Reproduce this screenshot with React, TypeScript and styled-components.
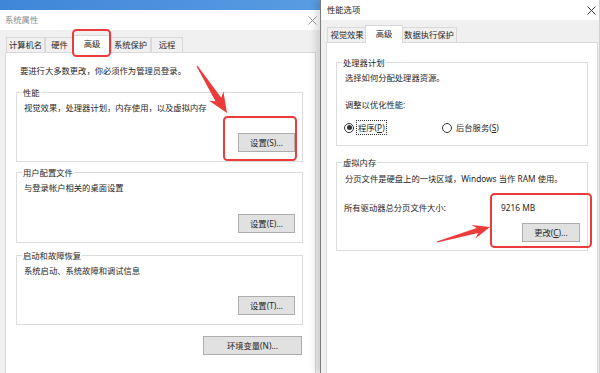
import { FC, ReactNode } from "react";
import styled, { createGlobalStyle } from "styled-components";

const GlobalStyle = createGlobalStyle`
  body {
    margin: 0;
  }
`;

const Root = styled.div`
  width: 600px;
  height: 373px;
  position: relative;
  overflow: hidden;
  display: flex;
  background: linear-gradient(90deg, #3f86d8 0%, #5c9fe4 60%, #4a8fdd 100%);
  font-family: "Noto Sans", "Noto Sans CJK SC", sans-serif;
  font-size: 8.3px;
  color: #262626;
`;

const LeftWindow = styled.section`
  width: 320px;
  margin-top: 10px;
  display: flex;
  flex-direction: column;
  background: #f0f0f0;
`;

const RightWindow = styled.section`
  flex: 1;
  display: flex;
  flex-direction: column;
  background: #f0f0f0;
  border-left: 1px solid #7d7d7d;
  border-right: 1px solid #d0d0d0;
  box-shadow: -5px 0 6px rgba(0, 0, 0, 0.12);
  z-index: 1;
`;

const TitleBar = styled.header<{ $left: number; $right: number; $inactive?: boolean }>`
  height: 20px;
  flex-shrink: 0;
  display: flex;
  align-items: center;
  justify-content: space-between;
  padding: 0 ${({ $right }) => $right}px 0 ${({ $left }) => $left}px;
  background: #fff;
  line-height: 12px;
  color: ${({ $inactive }) => ($inactive ? "#8c8c8c" : "#262626")};
`;

const TabStrip = styled.nav<{ $left: number }>`
  height: 22px;
  flex-shrink: 0;
  display: flex;
  align-items: flex-end;
  padding-left: ${({ $left }) => $left}px;
`;

const Tab = styled.div<{ $active?: boolean; $w: number }>`
  width: ${({ $w, $active }) => ($active ? $w + 4 : $w)}px;
  height: ${({ $active }) => ($active ? 18 : 15)}px;
  margin: ${({ $active }) => ($active ? "0 -2px -1px" : "0")};
  box-sizing: border-box;
  border: 1px solid #d9d9d9;
  border-bottom: none;
  background: ${({ $active }) => ($active ? "#fff" : "#f0f0f0")};
  display: flex;
  align-items: ${({ $active }) => ($active ? "flex-start" : "center")};
  padding-top: ${({ $active }) => ($active ? 2 : 0)}px;
  justify-content: center;
  line-height: 12px;
  white-space: nowrap;
  position: relative;
  z-index: ${({ $active }) => ($active ? 1 : 0)};
`;

const Page = styled.div<{ $ml: number; $mr: number; $pad: string }>`
  flex: 1;
  display: flex;
  flex-direction: column;
  background: #fff;
  border: 1px solid #d9d9d9;
  border-bottom: none;
  margin: 0 ${({ $mr }) => $mr}px 0 ${({ $ml }) => $ml}px;
  padding: ${({ $pad }) => $pad};
`;

const Intro = styled.p`
  margin: 0;
  padding-left: 4px;
  line-height: 12px;
  white-space: nowrap;
`;

const Group = styled.div<{ $h: number; $mt: number; $pb: number }>`
  height: ${({ $h }) => $h}px;
  margin-top: ${({ $mt }) => $mt}px;
  box-sizing: border-box;
  border: 1px solid #dcdcdc;
  display: flex;
  flex-direction: column;
  padding: 0 7px ${({ $pb }) => $pb}px 7px;
  flex-shrink: 0;
`;

const Caption = styled.span`
  align-self: flex-start;
  margin: -6px 0 0 -2px;
  padding: 0 1px;
  background: #fff;
  line-height: 11px;
  white-space: nowrap;
`;

const Desc = styled.p<{ $mt: number; $indent?: number }>`
  margin: ${({ $mt }) => $mt}px 0 0;
  padding-left: ${({ $indent }) => $indent ?? 0}px;
  line-height: 12px;
  white-space: nowrap;
`;

const ButtonRow = styled.div<{ $mt?: number; $pr?: number }>`
  margin-top: ${({ $mt }) => ($mt === undefined ? "auto" : `${$mt}px`)};
  padding-right: ${({ $pr }) => $pr ?? 0}px;
  display: flex;
  justify-content: flex-end;
`;

const WinButton = styled.button<{ $w: number }>`
  width: ${({ $w }) => $w}px;
  height: 19px;
  box-sizing: border-box;
  border: 1px solid #adadad;
  background: #e1e1e1;
  font: inherit;
  color: #262626;
  padding: 0;
  line-height: 17px;
`;

const RadioGroup = styled.div`
  margin-top: 9px;
  display: grid;
  grid-template-columns: 98px auto;
  align-items: center;
`;

const RadioOption = styled.label`
  display: flex;
  align-items: center;
  gap: 2px;
  line-height: 11px;
  white-space: nowrap;
`;

const RadioDot = styled.span<{ $checked?: boolean }>`
  width: 10px;
  height: 10px;
  box-sizing: border-box;
  border: 1px solid #333;
  border-radius: 50%;
  background: #fff;
  display: flex;
  align-items: center;
  justify-content: center;
  &::after {
    content: "";
    width: 5px;
    height: 5px;
    border-radius: 50%;
    background: ${({ $checked }) => ($checked ? "#333" : "transparent")};
  }
`;

const RadioText = styled.span<{ $focus?: boolean }>`
  padding: 1px 1px;
  border: 1px dotted ${({ $focus }) => ($focus ? "#333" : "transparent")};
`;

const SizeRow = styled.div`
  margin-top: 17px;
  display: grid;
  grid-template-columns: 157px auto;
  line-height: 12px;
  white-space: nowrap;
`;

const Overlay = styled.svg`
  position: absolute;
  left: 0;
  top: 0;
  pointer-events: none;
  z-index: 5;
`;

const CloseIcon: FC<{ color?: string }> = ({ color = "#3a3a3a" }) => (
  <svg width="9" height="9" viewBox="0 0 9 9">
    <path d="M0.5 0.5 L8.5 8.5 M8.5 0.5 L0.5 8.5" stroke={color} strokeWidth="1" />
  </svg>
);

const arrowPoints = (
  x1: number,
  y1: number,
  x2: number,
  y2: number,
  headLen: number,
  headHalf: number,
  shaftHalf: number
) => {
  const dx = x2 - x1;
  const dy = y2 - y1;
  const len = Math.hypot(dx, dy);
  const ux = dx / len;
  const uy = dy / len;
  const nx = -uy;
  const ny = ux;
  const bx = x2 - ux * headLen;
  const by = y2 - uy * headLen;
  const bx2 = x2 - ux * (headLen - 4);
  const by2 = y2 - uy * (headLen - 4);
  const pts = [
    [x1 + nx * 0.6, y1 + ny * 0.6],
    [bx2 + nx * shaftHalf, by2 + ny * shaftHalf],
    [bx + nx * headHalf, by + ny * headHalf],
    [x2, y2],
    [bx - nx * headHalf, by - ny * headHalf],
    [bx2 - nx * shaftHalf, by2 - ny * shaftHalf],
    [x1 - nx * 0.6, y1 - ny * 0.6],
  ];
  return pts.map((p) => `${p[0].toFixed(1)},${p[1].toFixed(1)}`).join(" ");
};

const RED = "#ec3b3b";

const Annotations: FC = () => (
  <Overlay width="600" height="373" viewBox="0 0 600 373">
    <rect x="73" y="30" width="37" height="26" rx="3.5" fill="none" stroke={RED} strokeWidth="2" />
    <rect x="224" y="117" width="72" height="43" rx="3.5" fill="none" stroke={RED} strokeWidth="2" />
    <rect x="491" y="194" width="100" height="53" rx="3.5" fill="none" stroke={RED} strokeWidth="2" />
    <polygon points={arrowPoints(197, 66, 227, 113, 20, 8.5, 3.4)} fill={RED} />
    <polygon points={arrowPoints(437, 242, 490, 227, 17, 7, 2.6)} fill={RED} />
  </Overlay>
);

interface SectionProps {
  title: string;
  text: string;
  button: string;
  h: number;
  mt: number;
}

const Section: FC<SectionProps> = ({ title, text, button, h, mt }) => (
  <Group $h={h} $mt={mt} $pb={9}>
    <Caption>{title}</Caption>
    <Desc $mt={4}>{text}</Desc>
    <ButtonRow>
      <WinButton $w={57}>{button}</WinButton>
    </ButtonRow>
  </Group>
);

const Mn: FC<{ children: ReactNode }> = ({ children }) => <u>{children}</u>;

const SystemProperties: FC = () => (
  <LeftWindow>
    <TitleBar $left={5} $right={3} $inactive>
      <span>系统属性</span>
      <CloseIcon color="#9a9a9a" />
    </TitleBar>
    <TabStrip $left={6}>
      <Tab $w={39}>计算机名</Tab>
      <Tab $w={29}>硬件</Tab>
      <Tab $w={36} $active>
        高级
      </Tab>
      <Tab $w={41}>系统保护</Tab>
      <Tab $w={32}>远程</Tab>
    </TabStrip>
    <Page $ml={5} $mr={4} $pad="12px 12px 0 10px">
      <Intro>要进行大多数更改，你必须作为管理员登录。</Intro>
      <Section
        title="性能"
        text="视觉效果，处理器计划，内存使用，以及虚拟内存"
        button="设置(S)..."
        h={70}
        mt={15}
      />
      <Section title="用户配置文件" text="与登录帐户相关的桌面设置" button="设置(E)..." h={71} mt={10} />
      <Section title="启动和故障恢复" text="系统启动、系统故障和调试信息" button="设置(T)..." h={70} mt={12} />
      <ButtonRow $mt={11} $pr={1}>
        <WinButton $w={99}>环境变量(N)...</WinButton>
      </ButtonRow>
    </Page>
  </LeftWindow>
);

const PerformanceOptions: FC = () => (
  <RightWindow>
    <TitleBar $left={6} $right={3}>
      <span>性能选项</span>
      <CloseIcon />
    </TitleBar>
    <TabStrip $left={6}>
      <Tab $w={40}>视觉效果</Tab>
      <Tab $w={34} $active>
        高级
      </Tab>
      <Tab $w={56}>数据执行保护</Tab>
    </TabStrip>
    <Page $ml={5} $mr={1} $pad="19px 9px 0 9px">
      <Group $h={84} $mt={0} $pb={8}>
        <Caption>处理器计划</Caption>
        <Desc $mt={4} $indent={1}>选择如何分配处理器资源。</Desc>
        <Desc $mt={15} $indent={1}>调整以优化性能:</Desc>
        <RadioGroup>
          <RadioOption>
            <RadioDot $checked />
            <RadioText $focus>
              程序(<Mn>P</Mn>)
            </RadioText>
          </RadioOption>
          <RadioOption>
            <RadioDot />
            <RadioText>
              后台服务(<Mn>S</Mn>)
            </RadioText>
          </RadioOption>
        </RadioGroup>
      </Group>
      <Group $h={89} $mt={16} $pb={8}>
        <Caption>虚拟内存</Caption>
        <Desc $mt={5} $indent={1}>分页文件是硬盘上的一块区域，Windows 当作 RAM 使用。</Desc>
        <SizeRow>
          <span>所有驱动器总分页文件大小:</span>
          <span>9216 MB</span>
        </SizeRow>
        <ButtonRow>
          <WinButton $w={58}>
            更改(<Mn>C</Mn>)...
          </WinButton>
        </ButtonRow>
      </Group>
    </Page>
  </RightWindow>
);

const App: FC = () => (
  <Root>
    <GlobalStyle />
    <SystemProperties />
    <PerformanceOptions />
    <Annotations />
  </Root>
);

export default App;
